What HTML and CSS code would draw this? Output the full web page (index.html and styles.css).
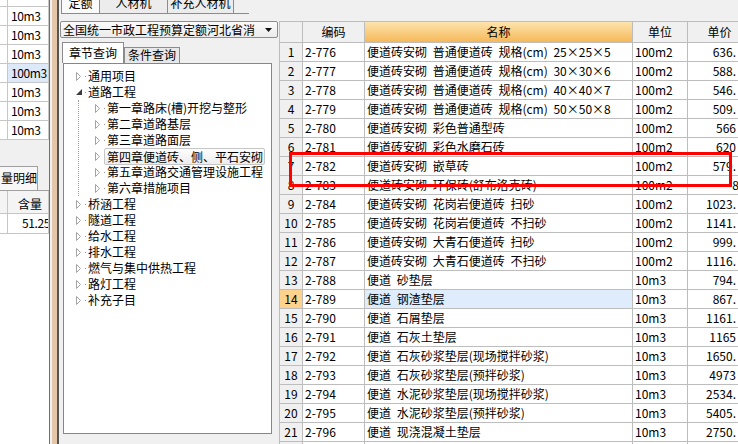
FILE: index.html
```html
<!DOCTYPE html>
<html lang="zh-CN">
<head>
<meta charset="utf-8">
<title>定额</title>
<link rel="stylesheet" href="styles.css">
</head>
<body>
<div class="app">
  <aside class="left">
    <div class="lgrid">
      <div class="lrow first"><span class="lc0"></span><span class="lc1"></span></div>
      <div class="lrow"><span class="lc0"></span><span class="lc1">10m3</span></div>
      <div class="lrow"><span class="lc0"></span><span class="lc1">10m3</span></div>
      <div class="lrow"><span class="lc0"></span><span class="lc1">10m3</span></div>
      <div class="lrow"><span class="lc0"></span><span class="lc1 sel">100m3</span></div>
      <div class="lrow"><span class="lc0"></span><span class="lc1">10m3</span></div>
      <div class="lrow"><span class="lc0"></span><span class="lc1">10m3</span></div>
      <div class="lrow"><span class="lc0"></span><span class="lc1">10m3</span></div>
    </div>
    <div class="lgap"></div>
    <div class="ltabs"><span class="ltab">量明细</span></div>
    <div class="lhead"><span class="lc0"></span><span class="lc1 c">含量</span></div>
    <div class="lrow data"><span class="lc0"></span><span class="lc1 val">51.25</span></div>
    <div class="lfill"></div>
  </aside>

  <div class="splitter"></div>

  <section class="mid">
    <div class="toptabs">
      <span class="ttab on t1">定额</span>
      <span class="ttab t2">人材机</span>
      <span class="ttab t3">补充人材机</span>
    </div>
    <div class="combo">
      <span class="ctext">全国统一市政工程预算定额河北省消</span>
      <svg class="carrow" width="7" height="4" viewBox="0 0 7 4"><path d="M0 0H7L3.5 4Z" fill="#111"/></svg>
    </div>
    <div class="subtabs">
      <span class="stab on">章节查询</span>
      <span class="stab">条件查询</span>
    </div>
    <div class="tree">
      <div class="node"><span class="tw"><svg width="6" height="9" viewBox="0 0 6 9"><path d="M0.5 0.5L4.5 4.5L0.5 8.5Z" fill="#fff" stroke="#a3a3a3"/></svg></span><span class="dot"></span><span class="lbl">通用项目</span></div>
      <div class="node"><span class="tw"><svg width="6" height="6" viewBox="0 0 6 6"><path d="M6 0V6H0Z" fill="#3c3c3c"/></svg></span><span class="dot"></span><span class="lbl">道路工程</span></div>
      <div class="kids">
        <div class="node"><span class="tw"><svg width="6" height="9" viewBox="0 0 6 9"><path d="M0.5 0.5L4.5 4.5L0.5 8.5Z" fill="#fff" stroke="#a3a3a3"/></svg></span><span class="dot"></span><span class="lbl">第一章路床(槽)开挖与整形</span></div>
        <div class="node"><span class="tw"><svg width="6" height="9" viewBox="0 0 6 9"><path d="M0.5 0.5L4.5 4.5L0.5 8.5Z" fill="#fff" stroke="#a3a3a3"/></svg></span><span class="dot"></span><span class="lbl">第二章道路基层</span></div>
        <div class="node"><span class="tw"><svg width="6" height="9" viewBox="0 0 6 9"><path d="M0.5 0.5L4.5 4.5L0.5 8.5Z" fill="#fff" stroke="#a3a3a3"/></svg></span><span class="dot"></span><span class="lbl">第三章道路面层</span></div>
        <div class="node"><span class="tw"><svg width="6" height="9" viewBox="0 0 6 9"><path d="M0.5 0.5L4.5 4.5L0.5 8.5Z" fill="#fff" stroke="#a3a3a3"/></svg></span><span class="dot"></span><span class="lbl sel">第四章便道砖、侧、平石安砌</span></div>
        <div class="node"><span class="tw"><svg width="6" height="9" viewBox="0 0 6 9"><path d="M0.5 0.5L4.5 4.5L0.5 8.5Z" fill="#fff" stroke="#a3a3a3"/></svg></span><span class="dot"></span><span class="lbl">第五章道路交通管理设施工程</span></div>
        <div class="node"><span class="tw"><svg width="6" height="9" viewBox="0 0 6 9"><path d="M0.5 0.5L4.5 4.5L0.5 8.5Z" fill="#fff" stroke="#a3a3a3"/></svg></span><span class="dot"></span><span class="lbl">第六章措施项目</span></div>
      </div>
      <div class="node"><span class="tw"><svg width="6" height="9" viewBox="0 0 6 9"><path d="M0.5 0.5L4.5 4.5L0.5 8.5Z" fill="#fff" stroke="#a3a3a3"/></svg></span><span class="dot"></span><span class="lbl">桥涵工程</span></div>
      <div class="node"><span class="tw"><svg width="6" height="9" viewBox="0 0 6 9"><path d="M0.5 0.5L4.5 4.5L0.5 8.5Z" fill="#fff" stroke="#a3a3a3"/></svg></span><span class="dot"></span><span class="lbl">隧道工程</span></div>
      <div class="node"><span class="tw"><svg width="6" height="9" viewBox="0 0 6 9"><path d="M0.5 0.5L4.5 4.5L0.5 8.5Z" fill="#fff" stroke="#a3a3a3"/></svg></span><span class="dot"></span><span class="lbl">给水工程</span></div>
      <div class="node"><span class="tw"><svg width="6" height="9" viewBox="0 0 6 9"><path d="M0.5 0.5L4.5 4.5L0.5 8.5Z" fill="#fff" stroke="#a3a3a3"/></svg></span><span class="dot"></span><span class="lbl">排水工程</span></div>
      <div class="node"><span class="tw"><svg width="6" height="9" viewBox="0 0 6 9"><path d="M0.5 0.5L4.5 4.5L0.5 8.5Z" fill="#fff" stroke="#a3a3a3"/></svg></span><span class="dot"></span><span class="lbl">燃气与集中供热工程</span></div>
      <div class="node"><span class="tw"><svg width="6" height="9" viewBox="0 0 6 9"><path d="M0.5 0.5L4.5 4.5L0.5 8.5Z" fill="#fff" stroke="#a3a3a3"/></svg></span><span class="dot"></span><span class="lbl">路灯工程</span></div>
      <div class="node"><span class="tw"><svg width="6" height="9" viewBox="0 0 6 9"><path d="M0.5 0.5L4.5 4.5L0.5 8.5Z" fill="#fff" stroke="#a3a3a3"/></svg></span><span class="dot"></span><span class="lbl">补充子目</span></div>
    </div>
  </section>

  <section class="tpanel">
    <div class="grid">
      <div class="h"></div><div class="h">编码</div><div class="h sort">名称</div><div class="h">单位</div><div class="h">单价</div>

      <div class="n">1</div><div>2-776</div><div class="nm">便道砖安砌 普通便道砖 规格(cm) 25×25×5</div><div>100m2</div><div class="p">636.</div>
      <div class="n">2</div><div>2-777</div><div class="nm">便道砖安砌 普通便道砖 规格(cm) 30×30×6</div><div>100m2</div><div class="p">588.</div>
      <div class="n">3</div><div>2-778</div><div class="nm">便道砖安砌 普通便道砖 规格(cm) 40×40×7</div><div>100m2</div><div class="p">546.</div>
      <div class="n">4</div><div>2-779</div><div class="nm">便道砖安砌 普通便道砖 规格(cm) 50×50×8</div><div>100m2</div><div class="p">509.</div>
      <div class="n">5</div><div>2-780</div><div class="nm">便道砖安砌 彩色普通型砖</div><div>100m2</div><div class="p">566</div>
      <div class="n">6</div><div>2-781</div><div class="nm">便道砖安砌 彩色水磨石砖</div><div>100m2</div><div class="p">620</div>
      <div class="n">7</div><div>2-782</div><div class="nm">便道砖安砌 嵌草砖</div><div>100m2</div><div class="p">579.</div>
      <div class="n">8</div><div>2-783</div><div class="nm">便道砖安砌 环保砖(舒布洛克砖)</div><div>100m2</div><div class="p edge">8</div>
      <div class="n">9</div><div>2-784</div><div class="nm">便道砖安砌 花岗岩便道砖 扫砂</div><div>100m2</div><div class="p">1023.</div>
      <div class="n">10</div><div>2-785</div><div class="nm">便道砖安砌 花岗岩便道砖 不扫砂</div><div>100m2</div><div class="p">1141.</div>
      <div class="n">11</div><div>2-786</div><div class="nm">便道砖安砌 大青石便道砖 扫砂</div><div>100m2</div><div class="p">999.</div>
      <div class="n">12</div><div>2-787</div><div class="nm">便道砖安砌 大青石便道砖 不扫砂</div><div>100m2</div><div class="p">1116.</div>
      <div class="n">13</div><div>2-788</div><div class="nm">便道 砂垫层</div><div>10m3</div><div class="p">794.</div>
      <div class="n cur">14</div><div>2-789</div><div class="nm hl">便道 钢渣垫层</div><div>10m3</div><div class="p">867.</div>
      <div class="n">15</div><div>2-790</div><div class="nm">便道 石屑垫层</div><div>10m3</div><div class="p">1161.</div>
      <div class="n">16</div><div>2-791</div><div class="nm">便道 石灰土垫层</div><div>10m3</div><div class="p">1165</div>
      <div class="n">17</div><div>2-792</div><div class="nm">便道 石灰砂浆垫层(现场搅拌砂浆)</div><div>10m3</div><div class="p">1650.</div>
      <div class="n">18</div><div>2-793</div><div class="nm">便道 石灰砂浆垫层(预拌砂浆)</div><div>10m3</div><div class="p">4973</div>
      <div class="n">19</div><div>2-794</div><div class="nm">便道 水泥砂浆垫层(现场搅拌砂浆)</div><div>10m3</div><div class="p">2534.</div>
      <div class="n">20</div><div>2-795</div><div class="nm">便道 水泥砂浆垫层(预拌砂浆)</div><div>10m3</div><div class="p">5405.</div>
      <div class="n">21</div><div>2-796</div><div class="nm">便道 现浇混凝土垫层</div><div>10m3</div><div class="p">2750.</div>
      <div class="n"></div><div></div><div></div><div></div><div></div>
    </div>
    <div class="redbox"></div>
  </section>
</div>
</body>
</html>
```

FILE: styles.css
```css
* { box-sizing: border-box; }
html, body { margin: 0; padding: 0; }
body {
  width: 738px;
  height: 444px;
  overflow: hidden;
  background: #f0f0f0;
  font-family: "Noto Sans CJK SC", "Noto Sans", sans-serif;
  font-size: 12px;
  color: #000;
}
.app { display: flex; height: 444px; }

/* left strip */
.left { width: 49px; flex: none; display: flex; flex-direction: column; background: #fff; overflow: hidden; }
.lgrid { display: flex; flex-direction: column; }
.lrow { display: flex; height: 19px; flex: none; border-bottom: 1px solid #c6c6c6; }
.lrow.first { height: 7px; }
.lrow.data { height: 20px; }
.lc0 { width: 8px; flex: none; border-right: 1px solid #c6c6c6; }
.lc1 { flex: 1; min-width: 0; border-right: 1px solid #c6c6c6; padding-left: 3px; line-height: 18px; letter-spacing: -0.4px; white-space: nowrap; overflow: hidden; }
.lc1.sel { background: #dde9f8; }
.lc1.c { text-align: center; padding-left: 4px; line-height: 22px; padding-top: 4px; letter-spacing: 0; }
.lc1.val { padding-left: 14px; }
.lgap { height: 26px; flex: none; background: #f0f0f0; }
.ltabs { height: 25px; flex: none; background: #f0f0f0; display: flex; border-bottom: 1px solid #a0a0a0; }
.ltab { width: 46px; margin-left: -8px; padding-left: 8px; border: 1px solid #a0a0a0; border-bottom: none; background: #f7f7f7; line-height: 22px; white-space: nowrap; overflow: hidden; }
.lhead { display: flex; height: 23px; flex: none; background: #f4f4f4; border-bottom: 1px solid #c6c6c6; }
.lhead .lc1 { line-height: 18px; }
.lfill { flex: 1; background: #fff; }

/* splitter */
.splitter {
  width: 10px;
  flex: none;
  border-left: 1px solid #707070;
  border-right: 2px solid #555;
  background: linear-gradient(to right, #f0f0f0 0 2px, #e4c6aa 2px);
}

/* middle panel */
.mid { width: 220px; flex: none; display: flex; flex-direction: column; background: #f0f0f0; }
.toptabs { display: flex; align-items: flex-end; height: 14px; margin-left: 2px; width: 188px; border-bottom: 1px solid #8c8c8c; }
.ttab { flex: none; height: 20px; line-height: 17px; border: 1px solid #8c8c8c; border-bottom: none; background: #ececec; text-align: center; white-space: nowrap; }
.ttab.on { background: #fafafa; }
.t1 { width: 39px; }
.t2 { width: 68px; border-left: none; }
.t3 { width: 66px; border-left: none; }

.combo {
  margin: 7px 1px 0 1px;
  height: 17px;
  flex: none;
  border: 1px solid #8d8d8d;
  border-radius: 2px;
  background: linear-gradient(#fbfbfb, #ebebeb);
  display: flex;
  align-items: center;
  justify-content: space-between;
  padding: 0 5px 0 2px;
  line-height: 15px;
  white-space: nowrap;
}
.subtabs { display: flex; align-items: flex-end; height: 21px; flex: none; margin: 4px 0 0 3px; }
.stab { height: 16px; line-height: 14px; padding: 0 3px; border: 1px solid #8c8c8c; border-bottom: none; background: #e8e8e8; white-space: nowrap; }
.stab.on { height: 21px; line-height: 19px; padding: 0 6px; background: #fff; }

.tree {
  margin: 0 0 0 4px;
  width: 209px;
  height: 371px;
  flex: none;
  border: 1px solid #828790;
  background: #fff;
  padding: 4px 0 0 12px;
  overflow: hidden;
}
.node { display: flex; align-items: center; height: 16px; white-space: nowrap; }
.tw { width: 6px; flex: none; display: flex; align-items: center; justify-content: flex-start; }
.tw svg { display: block; }
.dot { width: 1px; height: 1px; flex: none; background: #9a9a9a; margin: 0 2px 0 3px; }
.lbl { line-height: 16px; }
.lbl.sel {
  margin-left: -3px;
  padding: 0 1px 0 2px;
  line-height: 15px;
  border: 1px solid #c6c6c6;
  border-radius: 2px;
  background: linear-gradient(#fdfdfd, #ededed);
}
.kids { margin-left: 2px; border-left: 1px dotted #a0a0a0; padding-left: 16px; }

/* table panel */
.tpanel { flex: 1; min-width: 0; position: relative; overflow: hidden; padding-top: 21px; background: #f0f0f0; }
.grid {
  display: grid;
  grid-template-columns: 23px 62px 268px 55px 64px;
  width: max-content;
  border-left: 1px solid #bdbdbd;
  border-top: 1px solid #bdbdbd;
  background: #fff;
}
.grid > div {
  height: 19px;
  line-height: 18px;
  padding-left: 2px;
  border-right: 1px solid #bdbdbd;
  border-bottom: 1px solid #bdbdbd;
  background: #fff;
  white-space: nowrap;
  overflow: hidden;
}
.grid > .h { height: 21px; line-height: 20px; padding: 0; text-align: center; background: #f0f0f0; }
.grid > .h.sort { background: linear-gradient(#fde4ae, #f5b858); }
.grid > .n { padding: 0; text-align: center; background: #f0f0f0; }
.grid > .n.cur { background: #fdd28c; }
.grid > .nm { word-spacing: 3px; }
.grid > .hl { background: #deecfc; }
.grid > .p { padding: 0 15px 0 0; text-align: right; }
.grid > .p.edge { padding-right: 12px; }

.redbox {
  position: absolute;
  left: 10px;
  top: 152px;
  width: 443px;
  height: 35px;
  border: 3px solid #ff0000;
}
```
